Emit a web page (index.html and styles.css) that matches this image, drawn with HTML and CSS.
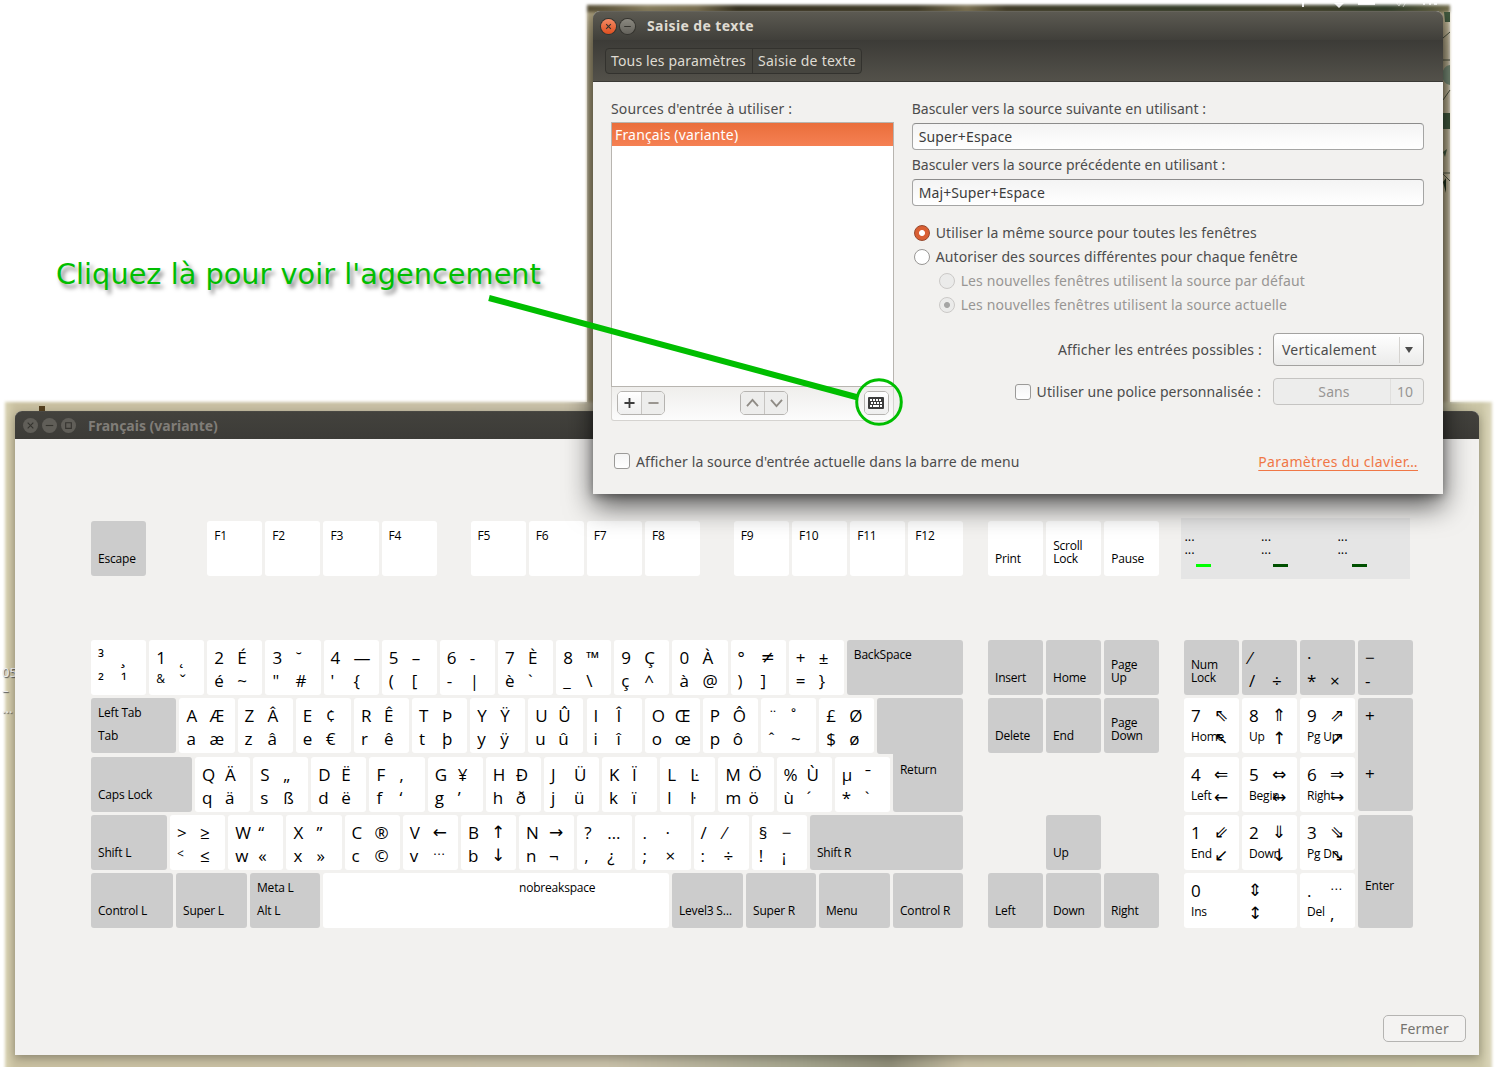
FILE: index.html
```html
<!DOCTYPE html>
<html lang="fr">
<head>
    <meta charset="UTF-8">
    <title>Saisie de texte</title>
    <link rel="stylesheet" href="styles.css">
</head>
<body>
    <div class="desktop desktop-top"></div>
    <div class="desktop desktop-bottom"></div>
    <div class="icon-label">05<br>–<br>...</div>
    <svg class="desktop-details" width="1497" height="420" viewBox="0 0 1497 420">
        <path d="M39 406h6v6h-6z" fill="#54401f"/>
        <g fill="#fff">
            <path d="M1302 2h2v5h-2zM1334 3h10l-5 5zM1358 2h17v3h-17z"/>
            <path d="M1423 3h2v2h-2zM1429 3h2v2h-2zM1434 3h3v2h-3z" opacity=".8"/>
            <path d="M1396 2l3 4 2-4M1406 2l-3 5" fill="none" stroke="#fff" opacity=".6"/>
        </g>
        <g fill="#435b40">
            <path d="M1444 12h6v10h-5zM1443 113h7v16h-7zM1443 152l4-3-2 8z"/>
            <path d="M1450 65a7 9 0 0 0 0 20l0 9" fill="#7d927c"/>
            <path d="M1443 182l3-4v15z" fill="#20321d"/>
        </g>
        <g stroke="#4d5340" fill="none">
            <path d="M1443 38l7-6M1443 60h7M1443 100l7-10M1443 173h7M1443 174l7 7"/>
        </g>
    </svg>

    <div class="window keyboard-window">
        <div class="titlebar inactive">
            <span class="wm-btn"><svg viewBox="0 0 16 16"><path d="M5 5l6 6M11 5l-6 6"/></svg></span>
            <span class="wm-btn"><svg viewBox="0 0 16 16"><path d="M4 8h8"/></svg></span>
            <span class="wm-btn"><svg viewBox="0 0 16 16"><path d="M5 5h6v6H5z"/></svg></span>
            <span class="title">Français (variante)</span>
        </div>
        <div class="keyboard">
            <div class="kb-top">
                <div class="row function-row" id="function-row"></div>
                <div class="row" id="print-row"></div>
                <div class="indicators">
                    <div class="led on"><span>...</span><span>...</span><i></i></div>
                    <div class="led"><span>...</span><span>...</span><i></i></div>
                    <div class="led"><span>...</span><span>...</span><i></i></div>
                </div>
            </div>
            <div class="kb-main">
                <div class="block" id="main-block"></div>
                <div class="pad nav-pad" id="nav-pad"></div>
                <div class="pad num-pad" id="num-pad"></div>
            </div>
        </div>
        <div class="window-footer">
            <button class="btn-close">Fermer</button>
        </div>
    </div>

    <div class="window dialog">
        <div class="titlebar">
            <span class="wm-btn close"><svg viewBox="0 0 16 16"><path d="M5.5 5.5l5 5M10.5 5.5l-5 5"/></svg></span>
            <span class="wm-btn"><svg viewBox="0 0 16 16"><path d="M4.5 8h7"/></svg></span>
            <span class="title">Saisie de texte</span>
        </div>
        <div class="toolbar">
            <div class="breadcrumb">
                <span>Tous les paramètres</span>
                <span>Saisie de texte</span>
            </div>
        </div>
        <div class="dialog-body">
            <div class="columns">
                <div class="sources">
                    <div class="label label-sources">Sources d'entrée à utiliser :</div>
                    <div class="source-list">
                        <div class="source selected">Français (variante)</div>
                    </div>
                    <div class="list-toolbar">
                        <div class="btn-group">
                            <span class="tool"><svg viewBox="0 0 24 24"><path d="M6.5 12h11M12 6.500v11" stroke="#3c3c3c" stroke-width="2"/></svg></span>
                            <span class="tool disabled"><svg viewBox="0 0 24 24"><path d="M6.500 12h11" stroke="#9a9690" stroke-width="2"/></svg></span>
                        </div>
                        <div class="btn-group">
                            <span class="tool disabled"><svg viewBox="0 0 24 24"><path d="M6 15.500l6-7 6 7" stroke="#8f8b85" stroke-width="2"/></svg></span>
                            <span class="tool disabled"><svg viewBox="0 0 24 24"><path d="M6 8.500l6 7 6-7" stroke="#8f8b85" stroke-width="2"/></svg></span>
                        </div>
                        <div class="btn-group">
                            <span class="tool">
                                <svg viewBox="0 0 23 22">
                                    <rect x="3" y="5" width="16" height="12" rx="1" fill="#3c3c3c"/>
                                    <path d="M5 8h12M5 14h2M15 14h2" stroke="#fff" stroke-width="2" stroke-dasharray="2 1"/>
                                    <path d="M6 11h11" stroke="#fff" stroke-width="2" stroke-dasharray="2 1"/>
                                    <path d="M8 14h6" stroke="#fff" stroke-width="2"/>
                                </svg>
                            </span>
                        </div>
                    </div>
                </div>
                <div class="options">
                    <div class="label label-next">Basculer vers la source suivante en utilisant :</div>
                    <div class="entry">Super+Espace</div>
                    <div class="label label-prev">Basculer vers la source précédente en utilisant :</div>
                    <div class="entry">Maj+Super+Espace</div>
                    <div class="radios">
                        <div class="radio checked"><i></i><span>Utiliser la même source pour toutes les fenêtres</span></div>
                        <div class="radio"><i></i><span>Autoriser des sources différentes pour chaque fenêtre</span></div>
                        <div class="radio sub"><i></i><span>Les nouvelles fenêtres utilisent la source par défaut</span></div>
                        <div class="radio sub checked"><i></i><span>Les nouvelles fenêtres utilisent la source actuelle</span></div>
                    </div>
                    <div class="field field-combo">
                        <span>Afficher les entrées possibles :</span>
                        <div class="combo"><span>Verticalement</span><i></i></div>
                    </div>
                    <div class="field field-font">
                        <i class="checkbox"></i>
                        <span>Utiliser une police personnalisée :</span>
                        <div class="font-button"><span>Sans</span><b>10</b></div>
                    </div>
                </div>
            </div>
            <div class="dialog-footer">
                <i class="checkbox"></i>
                <span>Afficher la source d'entrée actuelle dans la barre de menu</span>
                <a href="#">Paramètres du clavier…</a>
            </div>
        </div>
    </div>

    <div class="callout">Cliquez là pour voir l'agencement</div>
    <svg class="callout-arrow" width="1497" height="1067" viewBox="0 0 1497 1067">
        <path d="M489 298L858 397.500" stroke-width="6"/>
        <circle cx="879" cy="402" r="22.300" stroke-width="3"/>
    </svg>

    <script>
        const U = 55.15;

        // four levels of a key, separated by spaces: shift, shift+altgr, base, altgr
        const g = (levels, w = U) => ({ levels: levels.split(' '), w });
        // named key: label at the top and at the bottom
        const n = (top, bottom, w = U, cls = 'mod') => ({ top, bottom, w, cls });

        const functionRow = [
            n('', 'Escape', U, 'mod esc'),
            ...['F1', 'F2', 'F3', 'F4', 'F5', 'F6', 'F7', 'F8', 'F9', 'F10', 'F11', 'F12']
                .map(f => n(f, '', U, /^F[48]$/.test(f) ? 'group-end' : '')),
        ];

        const printRow = [n('', 'Print', U, ''), n('', 'Scroll<br>Lock', U, ''), n('', 'Pause', U, '')];

        const mainRows = [
            [...['³ ¸ ² ¹', '1 ˛ s& ˇ', '2 É é ~', '3 ˘ " #', "4 — ' {", '5 – ( [', '6 - - |', '7 È è `',
                '8 ™ _ \\', '9 Ç ç ^', '0 À à @', '° ≠ ) ]', '+ ± = }'].map(k => g(k)), n('BackSpace', '', 116)],
            [n('Left Tab', 'Tab', 85.4), ...['A Æ a æ', 'Z Â z â', 'E ¢ e €', 'R Ê r ê', 'T Þ t þ', 'Y Ÿ y ÿ', 'U Û u û',
                'I Î i î', 'O Œ o œ', 'P Ô p ô', '¨ ˚ ˆ ~', '£ Ø $ ø'].map(k => g(k)), n('', '', 85.6, 'mod return-top')],
            [n('', 'Caps Lock', 101), ...['Q Ä q ä', 'S „ s ß', 'D Ë d ë', 'F ‚ f ‘', 'G ¥ g ’', 'H Ð h ð', 'J Ü j ü',
                'K Ï k ï', 'L Ŀ l ŀ', 'M Ö m ö', '% Ù ù ´', 'µ ˉ * `'].map(k => g(k)), n('Return', '', 70, 'mod return-bottom')],
            [n('', 'Shift L', 76), ...['> ≥ s< ≤', 'W “ w «', 'X ” x »', 'C ® c ©', 'V ← v s⋯', 'B ↑ b ↓', 'N → n ¬',
                '? … , ¿', '. · ; ×', '/ ⁄ : ÷', '§ − ! ¡'].map(k => g(k)), n('', 'Shift R', 153)],
            [n('', 'Control L', 82), n('', 'Super L', 71), n('Meta L', 'Alt L', 70), n('nobreakspace', '', 346, 'space'),
                n('', 'Level3 S…', 71), n('', 'Super R', 70), n('', 'Menu', 71), n('', 'Control R', 70)],
        ];

        const navKeys = [
            n('', 'Insert'), n('', 'Home'), n('', 'Page<br>Up'),
            n('', 'Delete'), n('', 'End'), n('', 'Page<br>Down'),
            n('', 'Up', U, 'mod up'),
            n('', 'Left', U, 'mod last'), n('', 'Down', U, 'mod last'), n('', 'Right', U, 'mod last'),
        ];

        const numKeys = [
            n('', 'Num<br>Lock'), { ...g('⁄ _ / ÷'), cls: 'mod' }, { ...g('· _ * ×'), cls: 'mod' }, { ...g('− _ - _'), cls: 'mod' },
            g('7 ⇖ wHome ↖'), g('8 ⇑ wUp ↑'), g('9 ⇗ wPg_Up ↗'), { ...g('+ _ + _'), cls: 'mod tall plus' },
            g('4 ⇐ wLeft ←'), g('5 ⇔ wBegin ↔'), g('6 ⇒ wRight →'),
            g('1 ⇙ wEnd ↙'), g('2 ⇓ wDown ↓'), g('3 ⇘ wPg_Dn ↘'), n('', 'Enter', U, 'mod tall enter'),
            { ...g('0 ⇕ wIns ↕'), cls: 'wide' }, g('. s⋯ wDel ,'),
        ];

        function levelHtml(text, inPad) {
            let cls = 'glyph';
            if (text.length > 1 && text[0] === 's') { cls = 'glyph small'; text = text.slice(1); }
            if (text.length > 1 && text[0] === 'w') { cls = 'word'; text = text.slice(1).replace('_', ' '); }
            // in the pads "_" stands for an empty level
            if (text === '_' && inPad) text = '';
            if (/[←-⇿≠]/.test(text)) cls += ' arrow';
            return `<span class="${cls}">${text.replace('&', '&amp;').replace('<', '&lt;')}</span>`;
        }

        function keyHtml(key, inPad) {
            const width = inPad ? '' : ` style="width:${key.w}px"`;
            if (key.levels) {
                return `<div class="key levels ${key.cls || ''}"${width}>${key.levels.map(l => levelHtml(l, inPad)).join('')}</div>`;
            }
            return `<div class="key named ${key.cls}"${width}><span>${key.top}</span><span>${key.bottom}</span></div>`;
        }

        const fill = (id, keys, inPad) => {
            document.getElementById(id).innerHTML = keys.map(k => keyHtml(k, inPad)).join('');
        };

        fill('function-row', functionRow);
        fill('print-row', printRow);
        fill('nav-pad', navKeys, true);
        fill('num-pad', numKeys, true);
        document.getElementById('main-block').innerHTML = mainRows
            .map(row => `<div class="row">${row.map(k => keyHtml(k)).join('')}</div>`).join('');
    </script>
</body>
</html>
```
FILE: styles.css
```css
* {
    box-sizing: border-box;
}
body {
    margin: 0;
    width: 1497px;
    height: 1067px;
    overflow: hidden;
    position: relative;
    background: #fff;
    color: #4c4c4c;
    font-family: "Noto Sans", "DejaVu Sans", sans-serif;
    font-size: 14px;
}
i, b {
    font-style: normal;
    font-weight: normal;
}

/* desktop */
.desktop {
    position: absolute;
    filter: blur(1.5px);
}
.desktop-top {
    left: 587px;
    top: 5px;
    width: 863px;
    height: 420px;
    background: linear-gradient(90deg, #b0a482 0, #b5a983 8px, #b0a482 855px, #cbc2a4 100%);
}
.desktop-top::before {
    content: "";
    display: block;
    height: 7px;
    background: linear-gradient(90deg, #5a5138, #9a8f6c 60px, #8a7f5e 110px, #3d3826 150px, #4a4530 330px, #8d8260 380px, #4a4530 420px, #3c4630 600px, #4d4a30 700px, #35452f 800px, #75704e);
}
.desktop-bottom {
    left: 5px;
    top: 402px;
    width: 1487px;
    height: 675px;
    background: linear-gradient(90deg, #d8d2b2, #c9c0a0 10px, #c8c0a8 600px, #a3a38c 800px, #8f8d78 885px, #c8c0a4 960px, #cbc6a6 1476px, #dcd7bc);
}
.icon-label {
    position: absolute;
    left: 2px;
    top: 663px;
    width: 14px;
    overflow: hidden;
    font-size: 13px;
    line-height: 18px;
    color: #eee;
    text-shadow: 1px 1px 1px #555;
}
.desktop-details {
    position: absolute;
    left: 0;
    top: 0;
}

/* windows */
.window {
    position: absolute;
    display: flex;
    flex-direction: column;
    background: #f2f1ef;
    border-radius: 7px 7px 0 0;
}
.keyboard-window {
    left: 15px;
    top: 411px;
    width: 1464px;
    height: 644px;
    box-shadow: 0 3px 10px rgba(0, 0, 0, .3);
    clip-path: inset(-8px -11px -12px -9px);
}
.dialog {
    left: 593px;
    top: 11px;
    width: 850px;
    height: 483px;
    box-shadow: 0 12px 28px rgba(0, 0, 0, .65), 0 2px 8px rgba(0, 0, 0, .3);
    /* the shadow only falls on the desktop and the window below */
    clip-path: polygon(-6px -7px, 857px -7px, 857px 391px, 900px 391px, 900px 550px, -50px 550px, -50px 391px, -6px 391px);
}
.titlebar {
    display: flex;
    flex: none;
    align-items: center;
    gap: 3px;
    height: 29px;
    padding-left: 8px;
    border-radius: 7px 7px 0 0;
    background: linear-gradient(#5c5a52, #403f3a);
    border-top: 1px solid #66645b;
    color: #dfdbd2;
    font-size: 14px;
    font-weight: bold;
}
.titlebar.inactive {
    height: 28px;
    border-top-color: #4a4944;
    background: linear-gradient(#43423d, #3c3b37);
    color: #807d78;
}
.title {
    margin-left: 8px;
}
.dialog .title {
    padding-bottom: 1px;
    letter-spacing: .4px;
}
.wm-btn {
    width: 15px;
    height: 15px;
    margin-right: 1px;
    border-radius: 50%;
    background: linear-gradient(#8a8880, #65635c);
    box-shadow: 0 0 0 1px #35342f;
}
.wm-btn.close {
    background: linear-gradient(#f58a64, #df4f1f);
}
.inactive .wm-btn {
    background: #605e58;
    box-shadow: none;
}
.wm-btn svg {
    display: block;
    stroke: #35342f;
    stroke-width: 1.2;
    fill: none;
}
.toolbar {
    flex: none;
    height: 42px;
    padding: 8px 12px;
    background: linear-gradient(#3c3b37, #53514a);
    border-bottom: 1px solid #3a3935;
}
.breadcrumb {
    display: flex;
    width: 257px;
    height: 26px;
    border: 1px solid #33322e;
    border-radius: 4px;
    background: #46453f;
    color: #dfdbd2;
    line-height: 24px;
    letter-spacing: .15px;
    white-space: nowrap;
}
.breadcrumb span {
    padding-left: 5px;
}
.breadcrumb span + span {
    border-left: 1px solid #33322e;
    letter-spacing: .25px;
}
.breadcrumb span:first-child {
    width: 146px;
}

/* dialog */
.dialog-body {
    padding: 17px 19px 0 18px;
    letter-spacing: .12px;
    white-space: nowrap;
}
.columns {
    display: flex;
    gap: 18px;
    height: 332px;
}
.label {
    height: 24px;
    line-height: 20px;
}
.label-sources {
    height: 23px;
    letter-spacing: .16px;
}
.label-next, .label-prev {
    letter-spacing: .02px;
}
.sources {
    width: 283px;
}
.source-list {
    height: 265px;
    border: 1px solid #b8b5b0;
    background: #fff;
}
.source {
    height: 23px;
    padding-left: 3px;
    line-height: 23px;
    letter-spacing: .17px;
}
.source.selected {
    background: linear-gradient(#ea6e3b, #f58053);
    color: #fff;
}
.list-toolbar {
    display: flex;
    justify-content: space-between;
    height: 34px;
    padding: 4px 4px 0 5px;
    border: 1px solid #d5d3d0;
    border-top: 0;
    border-radius: 0 0 3px 3px;
    background: linear-gradient(#efeeec, #fcfcfc);
}
.btn-group {
    display: flex;
    height: 24px;
    border: 1px solid #b5b3b0;
    border-radius: 5px;
    overflow: hidden;
}
.tool {
    width: 23px;
    background: linear-gradient(#fff, #eee);
}
.tool.disabled {
    background: #ededec;
}
.tool + .tool {
    border-left: 1px solid #c6c4c1;
}
.tool svg {
    display: block;
    width: 23px;
    height: 22px;
    fill: none;
}
.options {
    width: 513px;
}
.entry {
    height: 27px;
    margin-bottom: 5px;
    padding-left: 6px;
    border: 1px solid #a5a5a4;
    border-top-color: #8c8c8b;
    border-radius: 4px;
    background: linear-gradient(#f4f4f4, #fff);
    color: #3c3c3c;
    line-height: 26px;
}
.radios {
    margin-top: 14px;
    padding-left: 2px;
}
.radio {
    display: flex;
    align-items: center;
    gap: 6px;
    height: 24px;
}
.radio i {
    width: 16px;
    height: 16px;
    margin-top: 1px;
    border: 1px solid #989694;
    border-radius: 50%;
    background: #fff;
}
.radio.checked i {
    border-color: #97462a;
    background: radial-gradient(circle, #fff 2.5px, #d95f33 3.5px);
}
.radio.sub {
    padding-left: 25px;
    color: #989694;
}
.radio.sub i {
    border-color: #cbc9c7;
    background: #ebebea;
}
.radio.sub.checked i {
    background: radial-gradient(circle, #a5a5a4 2.5px, #ebebea 3.5px);
}
.field {
    display: flex;
    align-items: center;
    justify-content: flex-end;
}
.field-combo {
    margin-top: 17px;
    gap: 11px;
    letter-spacing: .18px;
}
.combo {
    display: flex;
    align-items: center;
    justify-content: space-between;
    width: 151px;
    height: 33px;
    padding: 0 10px 0 8px;
    border: 1px solid #a3a2a0;
    border-radius: 4px;
    background: linear-gradient(#fff, #ebebea);
    letter-spacing: .25px;
}
.combo i {
    padding: 10px 0 10px 5px;
    border-left: 1px solid #d5d3d0;
}
.combo i::before {
    content: "";
    display: block;
    border: 4.5px solid transparent;
    border-top: 6px solid #4c4c4c;
    border-bottom: 0;
}
.field-font {
    margin-top: 12px;
    gap: 6px;
    letter-spacing: .09px;
}
.field-font > .font-button {
    margin-left: 6px;
}
.checkbox {
    width: 16px;
    height: 16px;
    border: 1px solid #9b9a98;
    border-radius: 3px;
    background: linear-gradient(#f4f4f4, #fff);
}
.font-button {
    display: flex;
    width: 151px;
    height: 27px;
    border: 1px solid #c5c4c2;
    border-radius: 4px;
    background: #ededec;
    color: #989694;
    line-height: 25px;
    text-align: center;
}
.font-button span {
    flex: 1;
    padding-left: 4px;
}
.font-button b {
    width: 33px;
    padding-right: 4px;
    border-left: 1px solid #e0dfdd;
}
.dialog-footer {
    display: flex;
    align-items: center;
    gap: 6px;
    height: 40px;
    padding: 0 6px 0 3px;
    margin-top: 10px;
    letter-spacing: .09px;
}
.dialog-footer a {
    margin-left: auto;
    color: #f07746;
    letter-spacing: .36px;
    text-underline-offset: 3px;
}

/* keyboard */
.keyboard {
    padding: 82px 0 0 76px;
    color: #000;
    font-family: "Open Sans", "Noto Sans", "DejaVu Sans", sans-serif;
}
.kb-top, .kb-main {
    display: flex;
    gap: 25px;
}
.kb-top {
    height: 119px;
}
.kb-main {
    height: 289px;
}
.row {
    display: flex;
    gap: 3px;
    height: 55px;
}
.block {
    display: flex;
    flex-direction: column;
    gap: 3.25px;
    width: 872px;
}
.block .row {
    justify-content: space-between;
}
.function-row {
    width: 872px;
}
.key {
    flex: none;
    height: 55px;
    border-radius: 3px;
    background: #fff;
    white-space: nowrap;
}
.key.mod {
    background: #ccc;
}
.key.esc {
    margin-right: 58px;
}
.key.group-end {
    margin-right: 30.8px;
}
.named {
    display: flex;
    flex-direction: column;
    justify-content: space-between;
    padding: 8px 0 11px 7px;
    font-size: 12px;
    line-height: 13px;
}
.named, .word {
    letter-spacing: -.2px;
}
.space {
    padding-left: 196px;
}
.levels {
    display: grid;
    grid-template-columns: 23px 1fr;
    grid-template-rows: 23px 23px;
    padding: 6px 0 0 7px;
    font-size: 17px;
    line-height: 23px;
}
.levels span {
    width: 0;
}
.glyph.small {
    font-size: 12px;
    line-height: 20px;
}
.word {
    font-size: 12px;
    line-height: 20px;
}
.arrow {
    font-family: "DejaVu Sans", sans-serif;
    font-size: 17px;
}
.return-top {
    height: 56px;
    border-radius: 3px 3px 0 3px;
}
.return-bottom {
    height: 58.25px;
    margin-top: -3.25px;
    border-radius: 0 0 3px 3px;
    padding-top: 10px;
}
.pad {
    display: grid;
    grid-auto-rows: 55px;
    gap: 3.25px 3px;
}
.nav-pad {
    grid-template-columns: repeat(3, 55px);
    width: 171px;
}
.nav-pad .up {
    grid-column: 2;
    grid-row: 4;
}
.nav-pad .last {
    grid-row: 5;
}
.num-pad {
    grid-template-columns: repeat(4, 55px);
}
.tall {
    grid-row: span 2;
    height: 113px;
}
.plus {
    grid-template-rows: 58px 23px;
}
.enter {
    padding-bottom: 36px;
}
.wide {
    grid-column: span 2;
    grid-template-columns: 57px 1fr;
}
.indicators {
    display: flex;
    width: 229px;
    height: 61px;
    margin: -3px 0 0 -3px;
    padding: 12px 0 0 3px;
    background: #e5e5e5;
}
.led {
    display: flex;
    flex: none;
    flex-direction: column;
    width: 76.5px;
    font-size: 13px;
    line-height: 13px;
}
.led i {
    width: 15px;
    height: 3px;
    margin: 8px 0 0 12px;
    background: #005000;
}
.led:last-child i {
    margin-left: 15px;
}
.led.on i {
    background: #0f0;
}
.window-footer {
    display: flex;
    justify-content: flex-end;
    margin-top: auto;
    padding: 0 13px 13px 0;
}
.btn-close {
    width: 83px;
    height: 27px;
    border: 1px solid #b5b4b2;
    border-radius: 5px;
    background: #f4f3f2;
    color: #76736f;
    font: inherit;
    letter-spacing: .2px;
}

/* annotation */
.callout {
    position: absolute;
    left: 56px;
    top: 256px;
    color: #00be00;
    font-family: "DejaVu Sans", sans-serif;
    font-size: 28.8px;
    line-height: 36px;
    text-shadow: 3px 4px 4px rgba(0, 0, 0, .5);
    white-space: nowrap;
}
.callout-arrow {
    position: absolute;
    left: 0;
    top: 0;
    stroke: #00be00;
    fill: none;
}
```
